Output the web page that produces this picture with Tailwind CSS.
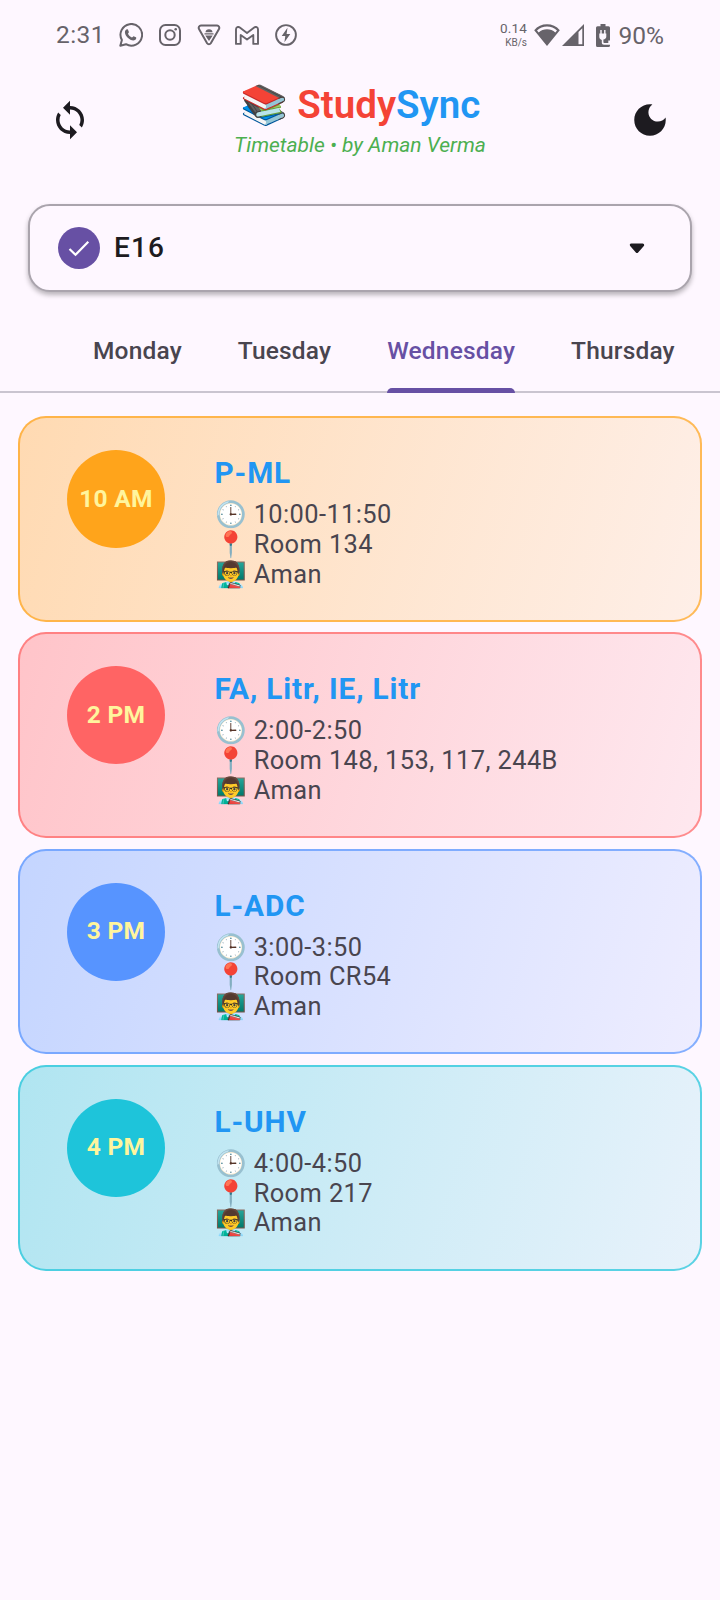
<!DOCTYPE html>
<html lang="en">
<head>
<meta charset="utf-8">
<title>StudySync</title>
<script src="https://cdn.jsdelivr.net/npm/@tailwindcss/browser@4"></script>
</head>
<body class="w-[720px] h-[1600px] overflow-hidden bg-[#fef7ff] font-['Roboto',sans-serif] text-[#1d1b20]">

  <!-- Status bar -->
  <div class="h-[70px] flex items-center pl-[56px] pr-[56px] text-[#67636a]">
    <span class="w-[63px] text-[24.5px] leading-[30px] tracking-[0.4px] font-[450]">2:31</span>
    <svg class="size-6" viewBox="0 0 24 24" fill="none" stroke="currentColor" stroke-width="2">
      <path d="M1.3 22.8 2.9 17.1A10.8 10.8 0 1 1 7 21.2Z" stroke-linejoin="round"/>
      <path fill="currentColor" stroke="none" d="M8.1 6.3c.4 0 .7 0 .9.5l.9 2.2c.1.4-.9 1.400-.9 1.800.8 1.700 2.100 2.900 3.900 3.700.5.1 1.300-1.500 1.700-1.300l2.300 1.100c.5.3.4.8.2 1.400-.4 1.100-1.600 1.700-2.700 1.700-3.900-.2-8.300-4.100-8.500-8.200 0-1.400 1.100-2.900 2.200-2.900z"/>
    </svg>
    <svg class="size-[22px] ml-[16px]" viewBox="0 0 22 22" fill="none" stroke="currentColor" stroke-width="2">
      <rect x="1" y="1" width="20" height="20" rx="5.500"/><circle cx="11" cy="11" r="4.700"/><circle cx="16.700" cy="5.200" r="1.300" fill="currentColor" stroke="none"/>
    </svg>
    <svg class="w-[24px] h-[22px] ml-[15.500px]" viewBox="0 0 24 22" fill="none" stroke="currentColor" stroke-width="2">
      <path d="M4 1.500h16a2.300 2.300 0 0 1 2 3.500l-8.200 14.300a2.200 2.200 0 0 1-3.700 0L2 5a2.300 2.300 0 0 1 2-3.500z"/>
      <path fill="currentColor" stroke="none" d="M8.500 8.300c0-2 1.500-3 3.500-3s3.500 1 3.500 3zM7.500 9.200h9v1.300h-9zM8.300 11.500h7.400L12 17z"/>
    </svg>
    <svg class="w-[24px] h-[19px] ml-[14.500px]" viewBox="0 0 24 19" fill="none" stroke="currentColor" stroke-width="1.900" stroke-linejoin="round">
      <path d="M1 17.900V3.200C1 1.200 3.200.3 4.800 1.500L12 7l7.200-5.500C20.800.3 23 1.200 23 3.200v14.700h-4.700V9L12 13.600 5.700 9v8.900z"/>
    </svg>
    <svg class="size-[22px] ml-[16px]" viewBox="0 0 22 22" fill="none" stroke="currentColor" stroke-width="1.900">
      <circle cx="11" cy="11" r="9.900"/><path fill="currentColor" stroke="none" d="M12.500 3.800 6.700 12h3.600l-.9 6.300 5.900-8.400h-3.700z"/>
    </svg>
    <div class="ml-auto flex items-center">
      <div class="flex flex-col items-end mr-[7px]">
        <span class="text-[13.500px] leading-[15px] tracking-[0.200px]">0.14</span>
        <span class="text-[10px] leading-[13px]">KB/s</span>
      </div>
      <svg class="w-[26px] h-[22px]" viewBox="0 0 26 22">
        <path fill="currentColor" d="M.2 6.200C3.500 2.300 8 .3 13 .3s9.500 2 12.800 5.900L13 22zM3 6.500l1.700 2C7 6.500 9.800 5.300 13 5.300s6 1.200 8.300 3.200l1.700-2C20.300 4 16.800 2.600 13 2.600S5.700 4 3 6.500z" fill-rule="evenodd"/>
      </svg>
      <svg class="w-[22px] h-[22px] ml-[2px]" viewBox="0 0 22 22">
        <path fill="currentColor" fill-rule="evenodd" d="M22 0v22H0zM20.300 4.200 16.500 8v12.300h3.800z"/>
      </svg>
      <svg class="w-[14px] h-[23px] ml-[12px]" viewBox="0 0 14 23">
        <path fill="currentColor" fill-rule="evenodd" d="M4.500 0h5v2.300H12.500A1.500 1.500 0 0 1 14 3.800V16.500H12.300V19H8.200c-.5 0-.8-.3-.8-.8v-2.600c1.700-.4 2.900-1.400 2.900-3.100V9.600H9.500V6H8.100v3.600H5.700V6H4.300v3.600H3.300v3.200c0 1.700 1 2.700 2.500 3.100v2.900c0 1.300.9 2 2.200 2H14v.7A1.500 1.500 0 0 1 12.500 23H1.500A1.500 1.500 0 0 1 0 21.500V3.800A1.500 1.500 0 0 1 1.500 2.300H4.500z"/>
      </svg>
      <span class="text-[24.500px] leading-[30px] ml-[8.500px] mt-[2px] font-[450]">90%</span>
    </div>
  </div>

  <!-- App bar -->
  <header class="flex items-start justify-between pl-[49px] pr-[49px] h-[134px] pt-[11px]">
    <svg class="size-[42px] mt-[17.500px]" viewBox="0 0 24 24" fill="currentColor"><path d="M12 4V1L8 5l4 4V6c3.310 0 6 2.690 6 6 0 1.010-.25 1.970-.7 2.800l1.460 1.460C19.540 15.030 20 13.570 20 12c0-4.420-3.580-8-8-8zm0 14c-3.310 0-6-2.690-6-6 0-1.010.25-1.970.7-2.800L5.240 7.740C4.460 8.970 4 10.430 4 12c0 4.420 3.580 8 8 8v3l4-4-4-4v3z"/></svg>
    <div class="flex flex-col items-center pt-[1px]">
      <h1 class="text-[38.500px] leading-[45px] font-semibold whitespace-nowrap"><span class="font-normal">📚 </span><span class="text-[#f44336]">Study</span><span class="text-[#2196f3]">Sync</span></h1>
      <p class="mt-[6px] text-[21px] leading-[25px] italic text-[#4caf50]">Timetable • by Aman Verma</p>
    </div>
    <svg class="size-[42px] mt-[17.500px]" viewBox="0 0 24 24" fill="currentColor"><path d="M12 3c-4.970 0-9 4.030-9 9s4.030 9 9 9 9-4.030 9-9c0-.46-.04-.92-.1-1.360-.98 1.370-2.580 2.260-4.400 2.260-2.980 0-5.400-2.420-5.400-5.400 0-1.810.89-3.420 2.260-4.400C12.920 3.040 12.460 3 12 3z"/></svg>
  </header>

  <!-- Section picker -->
  <div class="mx-[28px] h-[88px] rounded-[22px] border-2 border-[#aaa4ad] bg-[#fef7ff] shadow-[0_3px_5px_rgba(0,0,0,0.28)] flex items-center pl-[28px] pr-[45px]">
    <div class="size-[42px] rounded-full bg-[#6750a4] grid place-items-center">
      <svg class="w-[22px] h-[17px]" viewBox="0 0 22 17" fill="none" stroke="#fff" stroke-width="2.200"><path d="M1.500 9 7.500 14.800 20.300 1.800"/></svg>
    </div>
    <span class="ml-[14px] text-[28px] leading-[34px] tracking-[1.100px] font-[550] -mt-px">E16</span>
    <svg class="w-[16px] h-[11px] ml-auto" viewBox="0 0 16 11"><path fill="currentColor" stroke="currentColor" stroke-width="3" stroke-linejoin="round" d="M2.300 2h11.400L8 8.500z"/></svg>
  </div>

  <!-- Day tabs -->
  <nav class="h-[101px] flex gap-[56px] pl-[93px] border-b-2 border-[#cac4d0] text-[24.500px] leading-[30px] font-medium tracking-[0.175px] text-[#49454f] whitespace-nowrap">
    <span class="pt-[44px]">Monday</span>
    <span class="pt-[44px]">Tuesday</span>
    <div class="pt-[44px] -mb-[2px] flex flex-col justify-between text-[#6750a4]">
      <span>Wednesday</span>
      <span class="h-[5px] rounded-t-[5px] bg-[#6750a4]"></span>
    </div>
    <span class="pt-[44px]">Thursday</span>
  </nav>

  <!-- Classes -->
  <main class="mt-[23.300px] px-[18px] flex flex-col gap-[10.500px]">
    <article class="h-[205.700px] shrink-0 flex rounded-[28px] border-2 border-[#ffa41b]/70 bg-origin-border bg-[linear-gradient(106.800deg,#ffdab2,#feefe8)] pl-[47px]">
      <div class="mt-[32px] size-[98px] rounded-full bg-[#ffa41b] text-[#fff59d] text-[24.500px] font-bold tracking-[0.250px] flex items-center justify-center">10 AM</div>
      <div class="ml-[49.500px] pt-[37px]">
        <h2 class="text-[29.750px] leading-[35px] font-bold tracking-[0.875px] text-[#2196f3]">P-ML</h2>
        <div class="mt-[10px] text-[25.400px] leading-[29.750px] tracking-[0.420px] text-[#49454f]">
          <p>🕒 10:00-11:50</p><p>📍 Room 134</p><p>👨‍🏫 Aman</p>
        </div>
      </div>
    </article>
    <article class="h-[205.700px] shrink-0 flex rounded-[28px] border-2 border-[#ff6464]/70 bg-origin-border bg-[linear-gradient(106.800deg,#ffc4c9,#fee8ef)] pl-[47px]">
      <div class="mt-[32px] size-[98px] rounded-full bg-[#ff6464] text-[#fff59d] text-[24.500px] font-bold tracking-[0.250px] flex items-center justify-center">2 PM</div>
      <div class="ml-[49.500px] pt-[37px]">
        <h2 class="text-[29.750px] leading-[35px] font-bold tracking-[0.875px] text-[#2196f3]">FA, Litr, IE, Litr</h2>
        <div class="mt-[10px] text-[25.400px] leading-[29.750px] tracking-[0.420px] text-[#49454f]">
          <p>🕒 2:00-2:50</p><p>📍 Room 148, 153, 117, 244B</p><p>👨‍🏫 Aman</p>
        </div>
      </div>
    </article>
    <article class="h-[205.700px] shrink-0 flex rounded-[28px] border-2 border-[#5794ff]/70 bg-origin-border bg-[linear-gradient(106.800deg,#c4d5ff,#eeedff)] pl-[47px]">
      <div class="mt-[32px] size-[98px] rounded-full bg-[#5794ff] text-[#fff59d] text-[24.500px] font-bold tracking-[0.250px] flex items-center justify-center">3 PM</div>
      <div class="ml-[49.500px] pt-[37px]">
        <h2 class="text-[29.750px] leading-[35px] font-bold tracking-[0.875px] text-[#2196f3]">L-ADC</h2>
        <div class="mt-[10px] text-[25.400px] leading-[29.750px] tracking-[0.420px] text-[#49454f]">
          <p>🕒 3:00-3:50</p><p>📍 Room CR54</p><p>👨‍🏫 Aman</p>
        </div>
      </div>
    </article>
    <article class="h-[205.700px] shrink-0 flex rounded-[28px] border-2 border-[#1ec4da]/70 bg-origin-border bg-[linear-gradient(106.800deg,#b0e5f1,#e8f2fb)] pl-[47px]">
      <div class="mt-[32px] size-[98px] rounded-full bg-[#1ec4da] text-[#fff59d] text-[24.500px] font-bold tracking-[0.250px] flex items-center justify-center">4 PM</div>
      <div class="ml-[49.500px] pt-[37px]">
        <h2 class="text-[29.750px] leading-[35px] font-bold tracking-[0.875px] text-[#2196f3]">L-UHV</h2>
        <div class="mt-[10px] text-[25.400px] leading-[29.750px] tracking-[0.420px] text-[#49454f]">
          <p>🕒 4:00-4:50</p><p>📍 Room 217</p><p>👨‍🏫 Aman</p>
        </div>
      </div>
    </article>
  </main>
</body>
</html>
